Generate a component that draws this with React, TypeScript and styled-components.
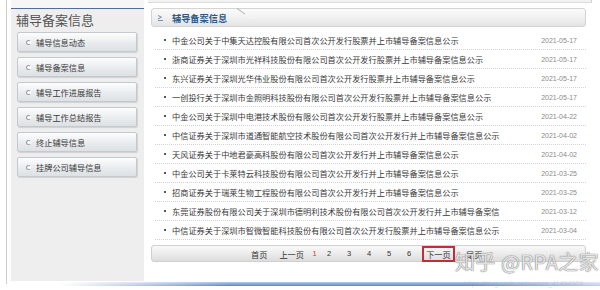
import React from 'react'
import styled, { createGlobalStyle } from 'styled-components'

const GlobalStyle = createGlobalStyle`
  html, body {
    margin: 0;
    padding: 0;
    background: #ffffff;
  }
  body {
    font-family: "Noto Sans CJK SC", "Liberation Sans", sans-serif;
  }
`

const CJK = '"Noto Sans CJK SC", "Liberation Sans", sans-serif'

const Page = styled.div`
  position: relative;
  width: 600px;
  height: 290px;
  overflow: hidden;
  background: #ffffff;
`

const Body = styled.div`
  display: flex;
  height: 281px;
`

const Side = styled.div`
  margin-left: 6px;
  border-left: 1px solid #cfcfcf;
  padding-left: 4px;
  height: 284px;
`

const SidePanel = styled.div`
  width: 133px;
  height: 281px;
  background: #eeeeee;
  display: flex;
  flex-direction: column;
`

const SideTop = styled.div`
  height: 8px;
  border-bottom: 1px solid #4d6f98;
  background: #f6f6f6;
`

const SideTitle = styled.div`
  font-family: ${CJK};
  font-size: 13px;
  line-height: 22px;
  height: 22px;
  color: #555555;
  padding-left: 5px;
  margin-bottom: 1px;
`

const NavList = styled.div`
  display: flex;
  flex-direction: column;
  gap: 5px;
  padding-left: 6px;
`

const NavButton = styled.div`
  width: 120px;
  height: 20px;
  box-sizing: border-box;
  display: flex;
  align-items: center;
  gap: 5px;
  padding-left: 8px;
  border: 1px solid #c4c9ce;
  border-radius: 2px;
  background: linear-gradient(#fdfdfd, #e9ecee 55%, #dde1e4);
  box-shadow: 1px 1px 1px rgba(0, 0, 0, 0.12);
  font-family: ${CJK};
  font-size: 8.2px;
  color: #3a3a3a;
`

const Radio = styled.span`
  width: 3px;
  height: 3px;
  border: 1px solid #9aa0a6;
  border-radius: 50%;
  border-right-color: transparent;
  background: #fff;
`

const Main = styled.div`
  width: 444px;
  margin-left: 4px;
  padding: 0 6px 0 3px;
  box-sizing: border-box;
  display: flex;
  flex-direction: column;
`

const TopStrip = styled.div`
  height: 3px;
  margin: 0 -6px 5px -3px;
  background: #f3f3f3;
  border-bottom: 1px solid #dcdcdc;
  border-right: 1px solid #d0d0d0;
  box-sizing: border-box;
`

const Header = styled.div`
  position: relative;
  height: 19px;
  box-sizing: border-box;
  border: 1px solid #d4d4d4;
  border-radius: 3px;
  background: linear-gradient(#fbfbfb, #f1f1f1 50%, #e4e4e4);
  display: flex;
  align-items: center;
  padding-left: 5px;
  gap: 8px;
  width: 435px;
`

const HeaderTitle = styled.span`
  font-family: ${CJK};
  font-size: 9.2px;
  font-weight: bold;
  color: #2c5a8c;
`

const TabMark = styled.svg`
  position: absolute;
  left: 84px;
  top: -1px;
`

const List = styled.ul`
  list-style: none;
  margin: 4px 0 0 4px;
  padding: 0;
  width: 431px;
`

const Row = styled.li`
  height: 19px;
  box-sizing: border-box;
  display: flex;
  align-items: center;
  padding: 0 9px 0 9px;
  border-bottom: 1px dotted #d2d2d2;
`

const Bullet = styled.span`
  width: 2px;
  height: 2px;
  background: #555;
  margin-right: 6px;
  flex: none;
`

const RowText = styled.span`
  flex: 1;
  font-family: ${CJK};
  font-size: 8.2px;
  color: #3a3a3a;
  white-space: nowrap;
  overflow: hidden;
`

const RowDate = styled.span`
  font-family: "Liberation Sans", sans-serif;
  font-size: 7px;
  color: #8a8a8a;
  flex: none;
`

const Pager = styled.div`
  margin-top: 5px;
  height: 17px;
  width: 435px;
  box-sizing: border-box;
  border: 1px solid #d0d0d0;
  border-radius: 3px;
  background: linear-gradient(#f9f9f9, #ececec 50%, #dcdcdc);
  display: flex;
  align-items: center;
  padding-left: 99px;
  font-family: ${CJK};
  font-size: 8.2px;
  color: #333;
`

const PageLink = styled.span<{ $ml: number; $w?: number; $current?: boolean }>`
  margin-left: ${(p) => p.$ml}px;
  width: ${(p) => (p.$w ? `${p.$w}px` : 'auto')};
  text-align: center;
  color: ${(p) => (p.$current ? '#d23a3a' : '#333')};
  font-family: ${(p) => (p.$w ? '"Liberation Sans", sans-serif' : CJK)};
  font-size: ${(p) => (p.$w ? '7.5px' : '8.2px')};
`

const NextBox = styled.span`
  margin-left: 3px;
  width: 33px;
  height: 16px;
  box-sizing: border-box;
  border: 2px solid #c52c33;
  display: flex;
  align-items: center;
  justify-content: center;
  margin-top: 1px;
`

const FooterLine = styled.div`
  margin-top: 1px;
  height: 4px;
  background: linear-gradient(#b9cbe8, #5f84c4);
  mask-image: linear-gradient(to right, transparent 10%, #000 38%, #000 78%, rgba(0, 0, 0, 0.4));
`

const Watermark = styled.div`
  position: absolute;
  left: 455px;
  top: 247px;
  font-family: ${CJK};
  font-size: 20px;
  color: rgba(255, 255, 255, 0.8);
  text-shadow: 0 0 1px #777, 0 0 1px #777;
  white-space: nowrap;
  letter-spacing: 0.5px;
`

const WatermarkUrl = styled.div`
  position: absolute;
  left: 464px;
  top: 280px;
  font-family: "Liberation Sans", sans-serif;
  font-size: 7px;
  color: rgba(160, 160, 160, 0.35);
  white-space: nowrap;
`

const navItems = [
  '辅导信息动态',
  '辅导备案信息',
  '辅导工作进展报告',
  '辅导工作总结报告',
  '终止辅导信息',
  '挂牌公司辅导信息',
]

const rows = [
  ['中金公司关于中集天达控股有限公司首次公开发行股票并上市辅导备案信息公示', '2021-05-17'],
  ['浙商证券关于深圳市光祥科技股份有限公司首次公开发行股票并上市辅导备案信息公示', '2021-05-17'],
  ['东兴证券关于深圳光华伟业股份有限公司首次公开发行股票并上市辅导备案信息公示', '2021-05-17'],
  ['一创投行关于深圳市金照明科技股份有限公司首次公开发行股票并上市辅导备案信息公示', '2021-05-17'],
  ['中金公司关于深圳中电港技术股份有限公司首次公开发行股票并上市辅导备案信息公示', '2021-04-22'],
  ['中信证券关于深圳市道通智能航空技术股份有限公司首次公开发行并上市辅导备案信息公示', '2021-04-02'],
  ['天风证券关于中地君豪高科股份有限公司首次公开发行并上市辅导备案信息公示', '2021-04-02'],
  ['中金公司关于卡莱特云科技股份有限公司首次公开发行并上市辅导备案信息公示', '2021-03-25'],
  ['招商证券关于瑞莱生物工程股份有限公司首次公开发行并上市辅导备案信息公示', '2021-03-25'],
  ['东莞证券股份有限公司关于深圳市德明利技术股份有限公司首次公开发行并上市辅导备案信', '2021-03-12'],
  ['中信证券关于深圳市智微智能科技股份有限公司首次公开发行股票并上市辅导备案信息公示', '2021-03-04'],
]

function HeaderIcon() {
  return (
    <svg width="7" height="6" viewBox="0 0 7 6">
      <path d="M1 0.5 L4.5 2.2 L1 3.9" fill="none" stroke="#7d8fa6" strokeWidth="1" />
      <path d="M1 5.5 H6" stroke="#7d8fa6" strokeWidth="1" />
    </svg>
  )
}

export default function App() {
  return (
    <Page>
      <GlobalStyle />
      <Body>
        <Side>
          <SidePanel>
            <SideTop />
            <SideTitle>辅导备案信息</SideTitle>
            <NavList>
              {navItems.map((item) => (
                <NavButton key={item}>
                  <Radio />
                  {item}
                </NavButton>
              ))}
            </NavList>
          </SidePanel>
        </Side>
        <Main>
          <TopStrip />
          <Header>
            <HeaderIcon />
            <HeaderTitle>辅导备案信息</HeaderTitle>
            <TabMark width="10" height="7" viewBox="0 0 10 7">
              <path d="M1 0.5 L9 6" stroke="#9a9a9a" strokeWidth="0.8" fill="none" />
            </TabMark>
          </Header>
          <List>
            {rows.map(([text, date]) => (
              <Row key={text}>
                <Bullet />
                <RowText>{text}</RowText>
                <RowDate>{date}</RowDate>
              </Row>
            ))}
          </List>
          <Pager>
            <PageLink $ml={0}>首页</PageLink>
            <PageLink $ml={12}>上一页</PageLink>
            <PageLink $ml={6} $w={9} $current>
              1
            </PageLink>
            <PageLink $ml={0} $w={20}>2</PageLink>
            <PageLink $ml={0} $w={20}>3</PageLink>
            <PageLink $ml={0} $w={20}>4</PageLink>
            <PageLink $ml={0} $w={20}>5</PageLink>
            <PageLink $ml={0} $w={20}>6</PageLink>
            <NextBox>下一页</NextBox>
            <PageLink $ml={11}>尾页</PageLink>
          </Pager>
        </Main>
      </Body>
      <FooterLine />
      <Watermark>知乎 @RPA之家</Watermark>
      <WatermarkUrl>https://blog.csdn.net/weixin_41494909</WatermarkUrl>
    </Page>
  )
}
